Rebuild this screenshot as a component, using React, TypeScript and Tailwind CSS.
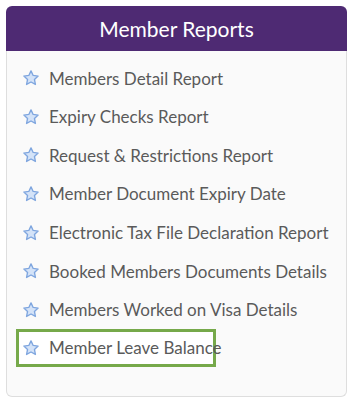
const reports = [
  'Members Detail Report',
  'Expiry Checks Report',
  'Request & Restrictions Report',
  'Member Document Expiry Date',
  'Electronic Tax File Declaration Report',
  'Booked Members Documents Details',
  'Members Worked on Visa Details',
  'Member Leave Balance',
];

const Star = () => (
  <svg width="18" height="18" viewBox="0 0 24 24" className="shrink-0">
    <path
      d="M12 2.5l2.9 6.1 6.6.8-4.9 4.6 1.3 6.6L12 17.3l-5.9 3.3 1.3-6.6-4.9-4.6 6.6-.8z"
      fill="#d4e3f8"
      stroke="#7fa6df"
      strokeWidth="1.8"
      strokeLinejoin="round"
    />
  </svg>
);

export default function App() {
  return (
    <div className="w-[361px] h-[406px] bg-white pt-[6px] pl-[6px]" style={{ fontFamily: 'Lato, "Open Sans", sans-serif' }}>
      <div className="w-[341px] h-[391px] flex flex-col">
        <div className="h-[45px] bg-[#4e2a73] rounded-t-[6px] flex items-center justify-center">
          <span className="text-white text-[21px] leading-none">Member Reports</span>
        </div>
        <div className="flex-1 bg-[#fafafa] border border-t-0 border-[#dedede] rounded-b-[6px] pt-[8px] pl-[9px]">
          {reports.map((r, i) => {
            const active = i === reports.length - 1;
            return (
              <div
                key={r}
                className={
                  active
                    ? 'h-[38px] w-[200px] flex items-center gap-[9px] pl-[3px] border-[3px] border-[#76a94a] bg-white'
                    : 'h-[38.6px] flex items-center gap-[9px] pl-[6px]'
                }
              >
                <Star />
                <span className="text-[17px] text-[#5a5a5a] whitespace-nowrap">{r}</span>
              </div>
            );
          })}
        </div>
      </div>
    </div>
  );
}
